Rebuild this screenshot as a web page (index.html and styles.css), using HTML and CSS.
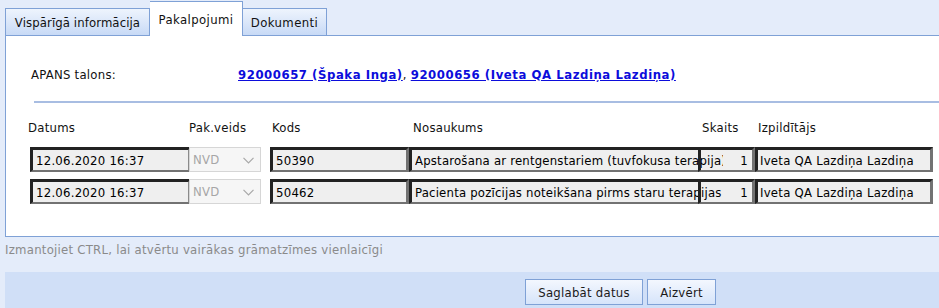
FILE: index.html
```html
<!DOCTYPE html>
<html lang="lv">
<head>
<meta charset="utf-8">
<title>Pakalpojumi</title>
<link rel="stylesheet" href="styles.css">
</head>
<body>
<div class="tabs">
  <div class="tab">Vispārīgā informācija</div>
  <div class="tab active">Pakalpojumi</div>
  <div class="tab tab-doc">Dokumenti</div>
</div>
<div class="panel">
  <div class="apans">
    <span class="apans-label">APANS talons:</span>
    <span class="apans-links"><a href="#">92000657 (Špaka Inga)</a>, <a href="#">92000656 (Iveta QA Lazdiņa Lazdiņa)</a></span>
  </div>
  <div class="sep"></div>
  <div class="head">
    <span class="h-datums">Datums</span>
    <span class="h-veids">Pak.veids</span>
    <span class="h-kods">Kods</span>
    <span class="h-nos">Nosaukums</span>
    <span class="h-skaits">Skaits</span>
    <span class="h-izp">Izpildītājs</span>
  </div>
  <div class="row">
    <input class="fld f-datums" value="12.06.2020 16:37" readonly>
    <div class="sel"><span class="sel-text">NVD</span><svg class="chev" width="11" height="7" viewBox="0 0 11 7"><path d="M0.5 0.8 L5.5 5.8 L10.5 0.8" fill="none" stroke="#a8a8a8" stroke-width="1.2"/></svg></div>
    <input class="fld f-kods" value="50390" readonly>
    <input class="fld f-nos" value="Apstarošana ar rentgenstariem (tuvfokusa terapija)" readonly>
    <input class="fld f-skaits" value="1" readonly>
    <input class="fld f-izp" value="Iveta QA Lazdiņa Lazdiņa" readonly>
  </div>
  <div class="row">
    <input class="fld f-datums" value="12.06.2020 16:37" readonly>
    <div class="sel"><span class="sel-text">NVD</span><svg class="chev" width="11" height="7" viewBox="0 0 11 7"><path d="M0.5 0.8 L5.5 5.8 L10.5 0.8" fill="none" stroke="#a8a8a8" stroke-width="1.2"/></svg></div>
    <input class="fld f-kods" value="50462" readonly>
    <input class="fld f-nos" value="Pacienta pozīcijas noteikšana pirms staru terapijas" readonly>
    <input class="fld f-skaits" value="1" readonly>
    <input class="fld f-izp" value="Iveta QA Lazdiņa Lazdiņa" readonly>
  </div>
</div>
<div class="hint">Izmantojiet CTRL, lai atvērtu vairākas grāmatzīmes vienlaicīgi</div>
<div class="actions">
  <button class="btn">Saglabāt datus</button>
  <button class="btn">Aizvērt</button>
</div>
</body>
</html>
```
FILE: styles.css
```css
* { box-sizing: border-box; }
html, body { margin: 0; padding: 0; }
body {
  width: 939px;
  height: 308px;
  overflow: hidden;
  background: #e4ecfa;
  font-family: "DejaVu Sans Condensed", "DejaVu Sans", sans-serif;
  font-stretch: condensed;
  font-size: 13px;
  letter-spacing: 0.25px;
  color: #111;
}

.tabs {
  display: flex;
  align-items: flex-end;
  height: 35px;
  padding-left: 5px;
}
.tab {
  height: 27px;
  width: 145px;
  border: 1px solid #7fa1d6;
  border-bottom: none;
  background: linear-gradient(#eef4fd, #c8daf6);
  text-align: center;
  line-height: 16px;
  padding-top: 6px;
  white-space: nowrap;
  letter-spacing: 0.1px;
}
.tab.active {
  width: 93px;
  height: 35px;
  margin-bottom: -1px;
  background: #fff;
  position: relative;
  z-index: 1;
  padding-top: 10px;
  border-left: none;
  letter-spacing: 0.4px;
}
.tab-doc {
  width: 84px;
  border-left: none;
  letter-spacing: 0.4px;
}

.panel {
  margin-left: 5px;
  height: 202px;
  background: #fff;
  border: 1px solid #7fa1d6;
  border-right: none;
}

.apans {
  display: flex;
  margin: 31px 0 0 25px;
  height: 16px;
  line-height: 16px;
}
.apans-label { width: 207px; }
.apans-links a {
  color: #0c0cdb;
  font-weight: bold;
  text-decoration: underline;
  letter-spacing: 0.55px;
}

.sep {
  margin: 18px 0 0 28px;
  height: 2px;
  background: #a8bde2;
}

.head {
  display: flex;
  margin: 17px 0 0 22px;
  height: 16px;
  line-height: 16px;
}
.h-datums { width: 161px; }
.h-veids { width: 83px; }
.h-kods { width: 141px; }
.h-nos { width: 289px; }
.h-skaits { width: 56px; }

.row {
  display: flex;
  margin: 11px 0 0 24px;
  height: 25px;
}
.row + .row { margin-top: 7px; }

.fld {
  height: 25px;
  margin: 0;
  padding: 0 3px;
  font: inherit;
  letter-spacing: inherit;
  color: #000;
  background: #efefef;
  border-style: solid;
  border-width: 3px 3px 2px 3px;
  border-color: #222 #727272 #727272 #222;
  outline: none;
}
.f-datums { width: 161px; border-right-color: #8a8a8a; }
.sel {
  position: relative;
  width: 72px;
  height: 25px;
  margin-left: -2px;
  border: 1px solid #d6d6d6;
  background: #f6f6f6;
  color: #a6a6a6;
  line-height: 23px;
  padding-left: 3px;
}
.chev {
  position: absolute;
  right: 6px;
  top: 9px;
}
.f-kods { width: 139px; margin-left: 9px; }
.f-nos { width: 346px; padding-right: 29px; letter-spacing: 0.2px; }
.f-skaits {
  width: 57px;
  margin-left: -57px;
  background: transparent;
  text-align: right;
  padding-right: 4px;
}
.f-izp { width: 178px; margin-left: 0; padding-left: 2px; }

.hint {
  margin: 5px 0 0 5px;
  height: 20px;
  line-height: 16px;
  color: #8a8a8a;
}

.actions {
  display: flex;
  gap: 4px;
  margin: 10px 0 0 5px;
  height: 40px;
  background: #d0dff7;
  padding: 7px 0 0 520px;
}
.btn {
  height: 26px;
  margin: 0;
  padding: 0 8px;
  font: inherit;
  letter-spacing: inherit;
  color: #1a1a1a;
  border: 1px solid #7fa1d6;
  background: linear-gradient(#f3f7fe, #d6e4fa);
}
.btn:first-child { width: 118px; }
.btn:last-child { width: 69px; }
```
